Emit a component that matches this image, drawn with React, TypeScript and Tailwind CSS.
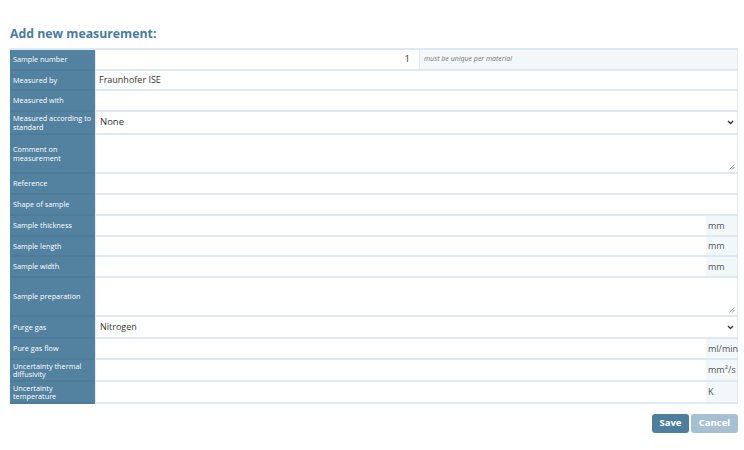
import type { ReactNode } from 'react';

type RowProps = {
  label: ReactNode;
  h: string;
  children?: ReactNode;
};

function Row({ label, h, children }: RowProps) {
  return (
    <div className={`flex ${h}`}>
      <div className="flex w-[85px] shrink-0 items-center overflow-hidden whitespace-nowrap border-b-2 border-[#4d7c99] bg-[#52829f] px-[3px] text-[7.3px] leading-[8.5px] text-white">
        <span>{label}</span>
      </div>
      <div className="flex min-w-0 flex-1 border-b-2 border-l border-[#deeaf2] bg-white">{children}</div>
    </div>
  );
}

function Unit({ children }: { children: ReactNode }) {
  return (
    <div className="flex w-[31px] shrink-0 items-center bg-[#f2f7fa] pl-[2px] text-[9px] text-[#555]">
      {children}
    </div>
  );
}

function Chevron() {
  return (
    <svg width="7" height="5" viewBox="0 0 7 5" className="mr-[3px]">
      <path d="M1 1l2.5 2.5L6 1" fill="none" stroke="#333" strokeWidth="1.3" />
    </svg>
  );
}

function Grip() {
  return (
    <svg width="6" height="6" viewBox="0 0 6 6" className="absolute bottom-[2px] right-[2px]">
      <path d="M5.5 0.5L0.5 5.5M5.5 3L3 5.5" stroke="#888" strokeWidth="0.8" />
    </svg>
  );
}

export default function App() {
  return (
    <div className="h-[450px] w-[744px] bg-white font-['Open_Sans',sans-serif] text-[#333]">
      <div className="pl-[10px] pr-[6px] pt-[26px]">
        <h2 className="mb-[6px] text-[12.3px] font-bold leading-[16px] text-[#4a7b9c]">Add new measurement:</h2>
        <div className="border-r border-t-2 border-[#deeaf2]">
          <Row label="Sample number" h="h-[21px]">
            <div className="flex w-[323px] items-center justify-end pr-[9px] text-[9.5px]">1</div>
            <div className="flex flex-1 items-center border-l border-[#deeaf2] bg-[#f2f7fa] pl-[4px] text-[7px] italic text-[#777]">
              must be unique per material
            </div>
          </Row>
          <Row label="Measured by" h="h-[20px]">
            <div className="flex items-center pl-[3px] text-[9px]">Fraunhofer ISE</div>
          </Row>
          <Row label="Measured with" h="h-[21px]" />
          <Row
            label={
              <>
                Measured according to
                <br />
                standard
              </>
            }
            h="h-[23px]"
          >
            <div className="flex flex-1 items-center justify-between pl-[4px] text-[9.5px]">
              <span>None</span>
              <Chevron />
            </div>
          </Row>
          <Row
            label={
              <>
                Comment on
                <br />
                measurement
              </>
            }
            h="h-[39px]"
          >
            <div className="relative flex-1">
              <Grip />
            </div>
          </Row>
          <Row label="Reference" h="h-[21px]" />
          <Row label="Shape of sample" h="h-[21px]" />
          <Row label="Sample thickness" h="h-[21px]">
            <div className="flex-1" />
            <Unit>mm</Unit>
          </Row>
          <Row label="Sample length" h="h-[20px]">
            <div className="flex-1" />
            <Unit>mm</Unit>
          </Row>
          <Row label="Sample width" h="h-[21px]">
            <div className="flex-1" />
            <Unit>mm</Unit>
          </Row>
          <Row label="Sample preparation" h="h-[39px]">
            <div className="relative flex-1">
              <Grip />
            </div>
          </Row>
          <Row label="Purge gas" h="h-[22px]">
            <div className="flex flex-1 items-center justify-between pl-[4px] text-[9px]">
              <span>Nitrogen</span>
              <Chevron />
            </div>
          </Row>
          <Row label="Pure gas flow" h="h-[21px]">
            <div className="flex-1" />
            <Unit>ml/min</Unit>
          </Row>
          <Row
            label={
              <>
                Uncertainty thermal
                <br />
                diffusivity
              </>
            }
            h="h-[22px]"
          >
            <div className="flex-1" />
            <Unit>
              mm<sup className="text-[6px]">2</sup>/s
            </Unit>
          </Row>
          <Row
            label={
              <>
                Uncertainty
                <br />
                temperature
              </>
            }
            h="h-[22px]"
          >
            <div className="flex-1" />
            <Unit>K</Unit>
          </Row>
        </div>
        <div className="mt-[10px] flex justify-end gap-[2px]">
          <button
            type="button"
            className="h-[19px] w-[37px] rounded-[3px] bg-[#4e7e9e] text-[9.5px] font-bold text-white"
          >
            Save
          </button>
          <button
            type="button"
            className="h-[19px] w-[47px] rounded-[3px] bg-[#a6c0d2] text-[9.5px] font-bold text-white"
          >
            Cancel
          </button>
        </div>
      </div>
    </div>
  );
}
